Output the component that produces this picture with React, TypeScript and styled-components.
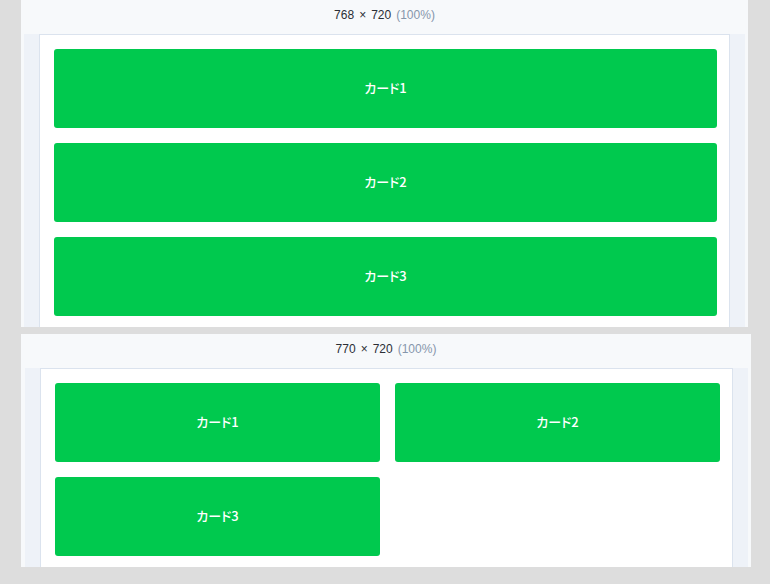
import React from "react";
import styled, { createGlobalStyle } from "styled-components";

const Global = createGlobalStyle`
  html, body { margin: 0; padding: 0; background: #dddddd; }
  body { font-family: "Noto Sans", "Noto Sans CJK JP", sans-serif; }
`;

const Page = styled.div`
  display: flex;
  flex-direction: column;
  gap: 7px;
  padding-left: 21px;
  height: 584px;
  overflow: hidden;
`;

const Panel = styled.section<{ $w: number; $h: number }>`
  width: ${(p) => p.$w}px;
  height: ${(p) => p.$h}px;
  background: #f7f9fb;
  display: flex;
  flex-direction: column;
  flex-shrink: 0;
`;

const Header = styled.div`
  height: 34px;
  flex-shrink: 0;
  display: flex;
  align-items: center;
  justify-content: center;
  padding-bottom: 4px;
  box-sizing: border-box;
  font-family: "Liberation Sans", Arial, sans-serif;
  font-size: 12px;
  color: #2b2f36;
`;

const Times = styled.span`
  margin: 0 5px;
`;

const Zoom = styled.span`
  color: #8696ab;
  margin-left: 5px;
`;

const Viewport = styled.div<{ $pl: number }>`
  flex: 1;
  margin: 0 3px 0 ${(p) => p.$pl}px;
  background: #eef2f8;
  padding: 0 15px;
  overflow: hidden;
  display: flex;
`;

const Frame = styled.div`
  flex: 1;
  background: #ffffff;
  border: 1px solid #dbe3ee;
  border-bottom: none;
  padding: 14px 12px 0 14px;
`;

const Grid = styled.div<{ $cols: number }>`
  display: grid;
  grid-template-columns: repeat(${(p) => p.$cols}, 1fr);
  gap: 15px;
`;

const Card = styled.div`
  height: 79px;
  padding-bottom: 2px;
  box-sizing: border-box;
  background: #00c94e;
  border-radius: 3px;
  display: flex;
  align-items: center;
  justify-content: center;
  color: #ffffff;
  font-family: "Noto Sans CJK JP", sans-serif;
  font-feature-settings: "palt";
  font-size: 13px;
  font-weight: 500;
`;

const cards = ["カード1", "カード2", "カード3"];

function Preview({
  w,
  h,
  label,
  cols,
  pl,
}: {
  w: number;
  h: number;
  label: string;
  cols: number;
  pl: number;
}) {
  return (
    <Panel $w={w} $h={h}>
      <Header>
        <span>{label}</span>
        <Times>×</Times>
        <span>720</span>
        <Zoom>(100%)</Zoom>
      </Header>
      <Viewport $pl={pl}>
        <Frame>
          <Grid $cols={cols}>
            {cards.map((c) => (
              <Card key={c}>{c}</Card>
            ))}
          </Grid>
        </Frame>
      </Viewport>
    </Panel>
  );
}

export default function App() {
  return (
    <>
      <Global />
      <Page>
        <Preview w={727} h={327} label="768" cols={1} pl={3} />
        <Preview w={730} h={233} label="770" cols={2} pl={4} />
      </Page>
    </>
  );
}
